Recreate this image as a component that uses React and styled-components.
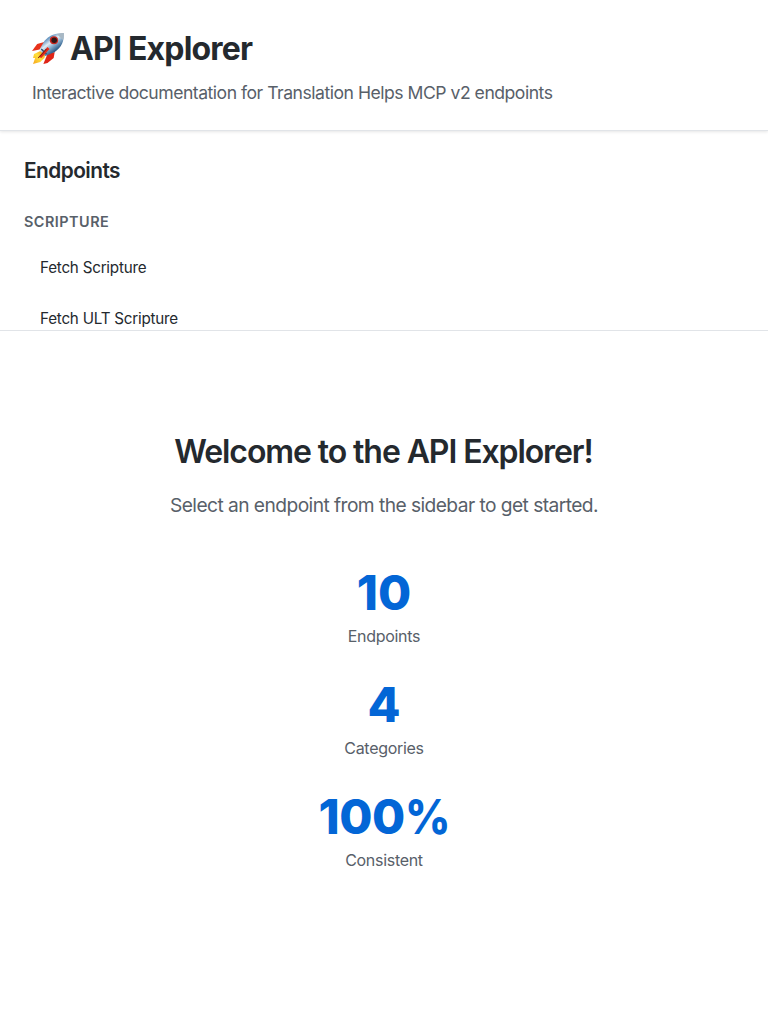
import React from "react";
import styled, { createGlobalStyle } from "styled-components";

const GlobalStyle = createGlobalStyle`
  * { box-sizing: border-box; }
  body {
    margin: 0;
    background: #fff;
    color: #24292e;
    font-family: Inter, "Liberation Sans", sans-serif;
    line-height: 1.5;
  }
  h1, h2, h3, p, ul { margin: 0; padding: 0; }
`;

const Page = styled.div`
  display: flex;
  flex-direction: column;
  height: 1024px;
`;

const Header = styled.header`
  height: 131px;
  flex: none;
  padding: 24px 32px;
  background: #fff;
  border-bottom: 1px solid #e1e4e8;
  box-shadow: 0 1px 3px rgba(0, 0, 0, 0.1);
  z-index: 1;
`;

const Title = styled.h1`
  display: flex;
  align-items: center;
  gap: 6px;
  height: 50px;
  font-size: 32px;
  font-weight: 700;
  letter-spacing: -0.81px;
  line-height: 50px;
  white-space: nowrap;
`;

const Subtitle = styled.p`
  margin-top: 5px;
  color: #586069;
  font-size: 17.6px;
  line-height: 28px;
  letter-spacing: -0.49px;
  white-space: nowrap;
`;

const Sidebar = styled.aside`
  flex: none;
  height: 200px;
  padding: 24px;
  overflow: hidden;
  background: #fff;
  border-bottom: 1px solid #e1e4e8;
`;

const SidebarTitle = styled.h2`
  font-size: 20.8px;
  font-weight: 600;
  line-height: 32px;
  letter-spacing: -0.52px;
`;

const Category = styled.h3`
  margin-top: 23px;
  color: #586069;
  font-size: 14.4px;
  font-weight: 600;
  line-height: 23px;
  letter-spacing: 0.5px;
  text-transform: uppercase;
`;

const EndpointList = styled.ul`
  display: flex;
  flex-direction: column;
  gap: 3px;
  margin-top: 11px;
  list-style: none;
`;

const Endpoint = styled.li`
  padding: 12px 16px;
  font-size: 15.2px;
  line-height: 24px;
  letter-spacing: -0.22px;
`;

const Main = styled.main`
  flex: 1;
  display: flex;
  flex-direction: column;
  align-items: center;
  padding-top: 96px;
  text-align: center;
`;

const Welcome = styled.h2`
  padding-right: 1px;
  font-size: 32px;
  font-weight: 600;
  line-height: 50px;
  letter-spacing: -1.09px;
`;

const Hint = styled.p`
  margin-top: 13px;
  color: #586069;
  font-size: 19.2px;
  line-height: 31px;
  letter-spacing: -0.56px;
`;

const Stats = styled.div`
  display: flex;
  flex-direction: column;
  gap: 32px;
  margin-top: 48px;
`;

const Stat = styled.div`
  height: 80px;
`;

const StatValue = styled.div`
  color: #0366d6;
  font-size: 48px;
  font-weight: 800;
  line-height: 48px;
  letter-spacing: ${({ $tracking }) => $tracking};
`;

const Percent = styled.span`
  display: inline-block;
  margin-right: -4px;
  transform: scaleX(0.92);
  transform-origin: left center;
`;

const StatLabel = styled.div`
  margin-top: 6px;
  color: #586069;
  font-size: 16px;
  line-height: 26px;
  letter-spacing: -0.3px;
`;

const RocketIcon = styled.svg`
  display: block;
  flex: none;
  width: 33px;
  height: 32px;
  margin-right: -1px;
`;

function Rocket() {
  return (
    <RocketIcon viewBox="0 0 32 32" preserveAspectRatio="none" aria-hidden="true">
      <defs>
        <linearGradient id="hull" x1="0.3" y1="0.25" x2="0.7" y2="0.75">
          <stop offset="0" stopColor="#5d8fbd" />
          <stop offset="0.35" stopColor="#e2edf5" />
          <stop offset="0.6" stopColor="#8fb2d0" />
          <stop offset="1" stopColor="#275987" />
        </linearGradient>
        <linearGradient id="flame" x1="1" y1="0" x2="0" y2="1">
          <stop offset="0" stopColor="#f58a12" />
          <stop offset="0.5" stopColor="#ffe13b" />
          <stop offset="1" stopColor="#f6a21c" />
        </linearGradient>
      </defs>
      <path d="M12 9 5 11 0 18 10 16Z" fill="#e8321b" />
      <path d="M22 19 21 25 15 30 11 31 15 21Z" fill="#df2417" />
      <path d="M8 18 2 21 1 25 3 25 1 31 8 29 12 25 13 21Z" fill="url(#flame)" />
      <path d="M31 0C23 0 17 2 12 8L7 17 13 23 22 19C29 14 31 8 31 0Z" fill="url(#hull)" />
      <path d="M31 0C28 0 26 .5 24 1L30 7C31 5 31 2 31 0Z" fill="#a8b8c4" />
      <path d="M9 16 14 21" stroke="#294d70" strokeWidth="1.4" />
      <path d="M15 14 17 16 9 25 7 24Z" fill="#e62a19" />
      <path d="M14 16 6 25" stroke="#7d1711" />
      <circle cx="21.3" cy="7.3" r="4" fill="#c92720" />
      <circle cx="21.5" cy="7.2" r="2.7" fill="#2d1717" />
    </RocketIcon>
  );
}

const endpoints = ["Fetch Scripture", "Fetch ULT Scripture"];
const stats = [
  { value: "10", label: "Endpoints", tracking: "0px" },
  { value: "4", label: "Categories", tracking: "0px" },
  { value: "100", percent: true, label: "Consistent", tracking: "-0.5px" },
];

export default function App() {
  return (
    <Page>
      <GlobalStyle />
      <Header>
        <Title><Rocket /><span>API Explorer</span></Title>
        <Subtitle>Interactive documentation for Translation Helps MCP v2 endpoints</Subtitle>
      </Header>
      <Sidebar>
        <SidebarTitle>Endpoints</SidebarTitle>
        <Category>Scripture</Category>
        <EndpointList>
          {endpoints.map((name) => <Endpoint key={name}>{name}</Endpoint>)}
        </EndpointList>
      </Sidebar>
      <Main>
        <Welcome>Welcome to the API Explorer!</Welcome>
        <Hint>Select an endpoint from the sidebar to get started.</Hint>
        <Stats>
          {stats.map(({ value, percent, label, tracking }) => (
            <Stat key={label}>
              <StatValue $tracking={tracking}>{value}{percent && <Percent>%</Percent>}</StatValue>
              <StatLabel>{label}</StatLabel>
            </Stat>
          ))}
        </Stats>
      </Main>
    </Page>
  );
}
